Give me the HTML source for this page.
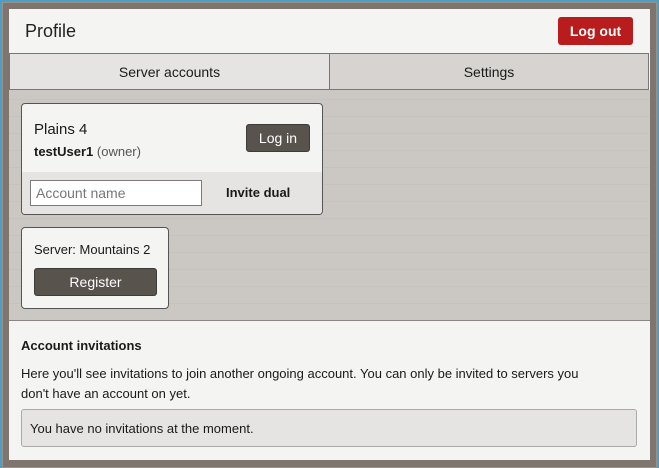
<!DOCTYPE html>
<html><head><style>
*{box-sizing:border-box;margin:0;padding:0}
body{width:659px;height:468px;background:#4a9fc8;font-family:"Liberation Sans",sans-serif;position:relative;overflow:hidden;color:#1a1a1a}
.frame{position:absolute;left:2px;top:2px;width:655px;height:466px;background:#7d756e;border:1px solid #9a928a}
.win{position:absolute;left:9px;top:9px;width:641px;height:451px;background:#f4f4f2}
.hdr{position:absolute;left:0;top:0;width:641px;height:44px}
.title{position:absolute;left:16px;top:12px;font-size:18px;color:#222}
.logout{position:absolute;left:549px;top:8px;width:75px;height:28px;background:#b81c1c;border-radius:3px;color:#fff;font-size:14px;font-weight:bold;text-align:center;line-height:28px}
.tab{position:absolute;top:44px;height:37px;border:1px solid #777;font-size:14px;text-align:center;line-height:36px}
.t1{left:0;width:321px;background:#e6e4e2}
.t2{left:320px;width:320px;background:#d6d3d0}
.bg{position:absolute;left:0;top:81px;width:641px;height:231px;background:#cbc8c3;border-bottom:1px solid #8a8580;
background-image:repeating-linear-gradient(0deg,transparent 0 16px,#c6c3be 16px 17px)}
.card{position:absolute;background:#f4f4f2;border:1px solid #555;border-radius:4px;overflow:hidden}
.c1{left:12px;top:94px;width:302px;height:112px}
.c1 .bot{position:absolute;left:0;top:68px;width:100%;height:44px;background:#e6e4e2}
.btn{position:absolute;background:#58534d;color:#fff;border-radius:3px;font-size:14px;text-align:center;border:1px solid #3f3b37}
.inp{position:absolute;left:8px;top:8px;width:172px;height:26px;background:#fff;border:1px solid #7a7a7a;font-size:14px;color:#777;padding:4px 5px}
.c2{left:12px;top:218px;width:148px;height:82px}
.sec{position:absolute;left:12px;top:329px;font-size:13px}
.box{position:absolute;left:12px;top:400px;width:616px;height:38px;background:#e6e4e2;border:1px solid #aaa;border-radius:3px;font-size:13px;padding:11px 8px}
</style></head><body>
<div class="frame"></div>
<div class="win">
<div class="hdr"><div class="title">Profile</div><div class="logout">Log out</div></div>
<div class="tab t1">Server accounts</div>
<div class="tab t2">Settings</div>
<div class="bg"></div>
<div class="card c1">
<div style="position:absolute;left:12px;top:17px;font-size:15px">Plains 4</div>
<div style="position:absolute;left:12px;top:40px;font-size:13px"><b>testUser1</b> <span style="color:#555">(owner)</span></div>
<div class="btn" style="left:224px;top:20px;width:64px;height:28px;line-height:26px">Log in</div>
<div class="bot"><div class="inp">Account name</div><div style="position:absolute;left:204px;top:13px;font-size:13px;font-weight:bold">Invite dual</div></div>
</div>
<div class="card c2">
<div style="position:absolute;left:12px;top:14px;font-size:13px">Server: Mountains 2</div>
<div class="btn" style="left:12px;top:40px;width:123px;height:28px;line-height:26px">Register</div>
</div>
<div class="sec"><b>Account invitations</b></div>
<div style="position:absolute;left:12px;top:355px;font-size:13px;line-height:20px;width:620px;white-space:nowrap">Here you'll see invitations to join another ongoing account. You can only be invited to servers you<br>don't have an account on yet.</div>
<div class="box">You have no invitations at the moment.</div>
</div>
</body></html>
